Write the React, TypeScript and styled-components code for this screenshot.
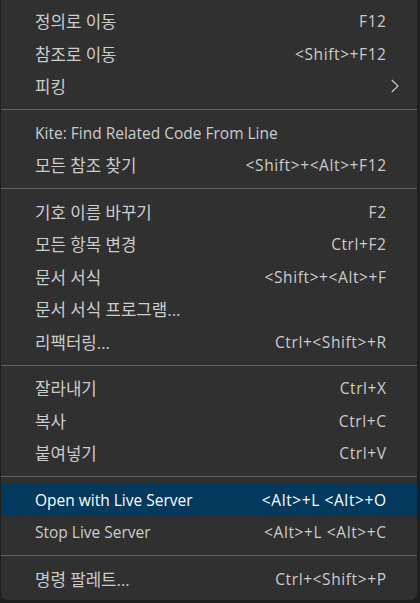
import styled, { createGlobalStyle } from "styled-components";

const GlobalStyle = createGlobalStyle`
  html, body {
    margin: 0;
    padding: 0;
    background: #1f1f1f;
  }
  body {
    width: 420px;
    height: 603px;
    overflow: hidden;
  }
`;

type Entry =
  | { kind: "item"; label: string; keys?: string; submenu?: boolean; active?: boolean }
  | { kind: "sep" };

const entries: Entry[] = [
  { kind: "item", label: "정의로 이동", keys: "F12" },
  { kind: "item", label: "참조로 이동", keys: "<Shift>+F12" },
  { kind: "item", label: "피킹", submenu: true },
  { kind: "sep" },
  { kind: "item", label: "Kite: Find Related Code From Line" },
  { kind: "item", label: "모든 참조 찾기", keys: "<Shift>+<Alt>+F12" },
  { kind: "sep" },
  { kind: "item", label: "기호 이름 바꾸기", keys: "F2" },
  { kind: "item", label: "모든 항목 변경", keys: "Ctrl+F2" },
  { kind: "item", label: "문서 서식", keys: "<Shift>+<Alt>+F" },
  { kind: "item", label: "문서 서식 프로그램..." },
  { kind: "item", label: "리팩터링...", keys: "Ctrl+<Shift>+R" },
  { kind: "sep" },
  { kind: "item", label: "잘라내기", keys: "Ctrl+X" },
  { kind: "item", label: "복사", keys: "Ctrl+C" },
  { kind: "item", label: "붙여넣기", keys: "Ctrl+V" },
  { kind: "sep" },
  { kind: "item", label: "Open with Live Server", keys: "<Alt>+L <Alt>+O", active: true },
  { kind: "item", label: "Stop Live Server", keys: "<Alt>+L <Alt>+C" },
  { kind: "sep" },
  { kind: "item", label: "명령 팔레트...", keys: "Ctrl+<Shift>+P" },
];

// korean labels get a slightly larger size, latin stays at the base size
const hasHangul = (s: string) => /[\uac00-\ud7a3]/.test(s);

const Menu = styled.div`
  margin-left: 1px;
  width: 416px;
  height: 600px;
  box-sizing: border-box;
  padding: 5px 0;
  background: #303031;
  border-radius: 0 0 7px 7px;
  display: flex;
  flex-direction: column;
  font-family: "Open Sans", "Noto Sans CJK KR", sans-serif;
  font-size: 15.5px;
  color: #cccccc;
`;

const Row = styled.div<{ $active?: boolean }>`
  height: 32.5px;
  flex-shrink: 0;
  display: grid;
  grid-template-columns: 1fr auto 31px;
  align-items: center;
  padding-left: 34px;
  background: ${(p) => (p.$active ? "#04395e" : "transparent")};
  color: ${(p) => (p.$active ? "#ffffff" : "#cccccc")};
`;

const Label = styled.span<{ $ko?: boolean }>`
  white-space: nowrap;
  font-size: ${(p) => (p.$ko ? "16.8px" : "15.5px")};
`;

const Keys = styled.span`
  white-space: nowrap;
  text-align: right;
  letter-spacing: 0.6px;
  margin-right: -0.6px;
`;

const Arrow = styled.span`
  display: flex;
  align-items: center;
  justify-content: flex-end;
  padding-right: 18px;
`;

const Separator = styled.div`
  flex-shrink: 0;
  height: 1px;
  margin: 6.5px 0;
  background: #606060;
`;

const Chevron = () => (
  <svg width="8" height="14" viewBox="0 0 8 14" fill="none">
    <path d="M0.8 1 L7 7 L0.8 13" stroke="#cccccc" strokeWidth="1.1" />
  </svg>
);

export default function App() {
  return (
    <>
      <GlobalStyle />
      <Menu>
        {entries.map((e, i) =>
          e.kind === "sep" ? (
            <Separator key={i} />
          ) : (
            <Row key={i} $active={e.active}>
              <Label $ko={hasHangul(e.label)}>{e.label}</Label>
              <Keys>{e.keys}</Keys>
              <Arrow>{e.submenu ? <Chevron /> : null}</Arrow>
            </Row>
          )
        )}
      </Menu>
    </>
  );
}
